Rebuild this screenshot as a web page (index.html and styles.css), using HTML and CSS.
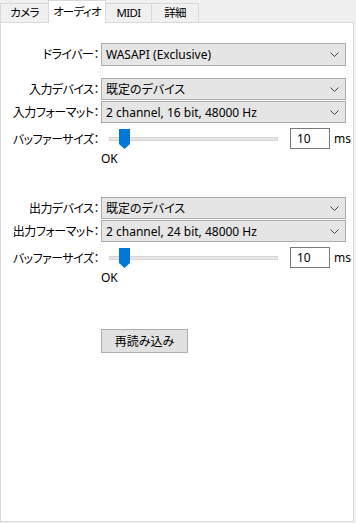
FILE: index.html
```html
<!DOCTYPE html>
<html lang="ja">

<head>
    <meta charset="UTF-8">
    <meta name="viewport" content="width=device-width, initial-scale=1.0">
    <title>設定</title>
    <link rel="stylesheet" href="styles.css">
</head>

<body>
    <div class="tabs">
        <div class="tab t1">カメラ</div>
        <div class="tab active">オーディオ</div>
        <div class="tab t3">MIDI</div>
        <div class="tab t4">詳細</div>
    </div>

    <div class="panel">
        <div class="row driver">
            <span class="label">ドライバー：</span>
            <div class="select"><span>WASAPI (Exclusive)</span><svg class="chev" width="9" height="5" viewBox="0 0 9 5"><path d="M0.5 0.5 L4.5 4.5 L8.5 0.5" fill="none" stroke="#444" stroke-width="1"/></svg></div>
        </div>

        <!-- 入力 -->
        <div class="group">
            <div class="row">
                <span class="label">入力デバイス：</span>
                <div class="select"><span>既定のデバイス</span><svg class="chev" width="9" height="5" viewBox="0 0 9 5"><path d="M0.5 0.5 L4.5 4.5 L8.5 0.5" fill="none" stroke="#444" stroke-width="1"/></svg></div>
            </div>
            <div class="row">
                <span class="label">入力フォーマット：</span>
                <div class="select"><span>2 channel, 16 bit, 48000 Hz</span><svg class="chev" width="9" height="5" viewBox="0 0 9 5"><path d="M0.5 0.5 L4.5 4.5 L8.5 0.5" fill="none" stroke="#444" stroke-width="1"/></svg></div>
            </div>
            <div class="row slider-row">
                <span class="label">バッファーサイズ：</span>
                <div class="slider">
                    <div class="track"></div>
                    <svg class="thumb" width="11" height="20" viewBox="0 0 11 20"><polygon points="0,0 11,0 11,15 5.5,20 0,15" fill="#0078d7"/></svg>
                </div>
                <div class="num">10</div>
                <span class="unit">ms</span>
            </div>
            <div class="status">OK</div>
        </div>

        <!-- 出力 -->
        <div class="group">
            <div class="row">
                <span class="label">出力デバイス：</span>
                <div class="select"><span>既定のデバイス</span><svg class="chev" width="9" height="5" viewBox="0 0 9 5"><path d="M0.5 0.5 L4.5 4.5 L8.5 0.5" fill="none" stroke="#444" stroke-width="1"/></svg></div>
            </div>
            <div class="row">
                <span class="label">出力フォーマット：</span>
                <div class="select"><span>2 channel, 24 bit, 48000 Hz</span><svg class="chev" width="9" height="5" viewBox="0 0 9 5"><path d="M0.5 0.5 L4.5 4.5 L8.5 0.5" fill="none" stroke="#444" stroke-width="1"/></svg></div>
            </div>
            <div class="row slider-row">
                <span class="label">バッファーサイズ：</span>
                <div class="slider">
                    <div class="track"></div>
                    <svg class="thumb" width="11" height="20" viewBox="0 0 11 20"><polygon points="0,0 11,0 11,15 5.5,20 0,15" fill="#0078d7"/></svg>
                </div>
                <div class="num">10</div>
                <span class="unit">ms</span>
            </div>
            <div class="status">OK</div>
        </div>

        <button class="reload">再読み込み</button>
    </div>
</body>

</html>
```

FILE: styles.css
```css
/* 全体 */
body {
    margin: 0;
    padding: 0;
    background-color: #f0f0f0;
    color: #000;
    font-family: "Noto Sans", "Noto Sans CJK JP", sans-serif;
    font-size: 12px;
    font-feature-settings: "palt";
}

/* タブ */
.tabs {
    display: flex;
    height: 22px;
    align-items: flex-end;
}

.tab {
    box-sizing: border-box;
    height: 19px;
    line-height: 17px;
    text-align: center;
    font-size: 11.5px;
    letter-spacing: -0.7px;
    background-color: #f0f0f0;
    border: 1px solid #d9d9d9;
    border-bottom: none;
    margin-right: -1px;
}

.t1 { width: 49px; }
.t3 { width: 47px; }
.t4 { width: 48px; }

.tab.active {
    width: 58px;
    height: 23px;
    line-height: 21px;
    background-color: #fff;
    position: relative;
    z-index: 1;
    margin-bottom: -1px;
}

.panel {
    box-sizing: border-box;
    width: 354px;
    height: 500px;
    background-color: #fff;
    border: 1px solid #d9d9d9;
    padding-top: 20px;
}

/* 行 */
.row {
    display: flex;
    align-items: center;
    height: 22px;
    margin-bottom: 1px;
}

.label {
    width: 98px;
    margin-right: 2px;
    text-align: right;
    white-space: nowrap;
    letter-spacing: -0.5px;
}

.select {
    box-sizing: border-box;
    width: 245px;
    height: 22px;
    display: flex;
    align-items: center;
    justify-content: space-between;
    padding: 0 6px 0 4px;
    background-color: #e5e5e5;
    border: 1px solid #adadad;
}

.driver .select {
    height: 23px;
}

.group {
    margin-top: 13px;
}

.group + .group {
    margin-top: 29px;
}

.slider-row {
    height: 21px;
    margin-top: 5px;
}

.slider {
    position: relative;
    width: 180px;
    height: 20px;
}

.track {
    position: absolute;
    left: 8px;
    top: 8px;
    width: 167px;
    height: 2px;
    background-color: #e7e7e7;
    border: 1px solid #d6d6d6;
}

.thumb {
    position: absolute;
    left: 18px;
    top: 0;
}

.num {
    box-sizing: border-box;
    width: 40px;
    height: 21px;
    margin-left: 9px;
    padding-left: 6px;
    line-height: 19px;
    border: 1px solid #7a7a7a;
    background-color: #fff;
}

.unit {
    margin-left: 4px;
}

.status {
    margin-left: 100px;
    margin-top: 1px;
    line-height: 18px;
}

.reload {
    display: block;
    margin: 42px 0 0 100px;
    width: 87px;
    height: 24px;
    padding: 0;
    font-family: inherit;
    font-size: 12px;
    font-feature-settings: "palt";
    color: #000;
    background-color: #e1e1e1;
    border: 1px solid #adadad;
}
```
